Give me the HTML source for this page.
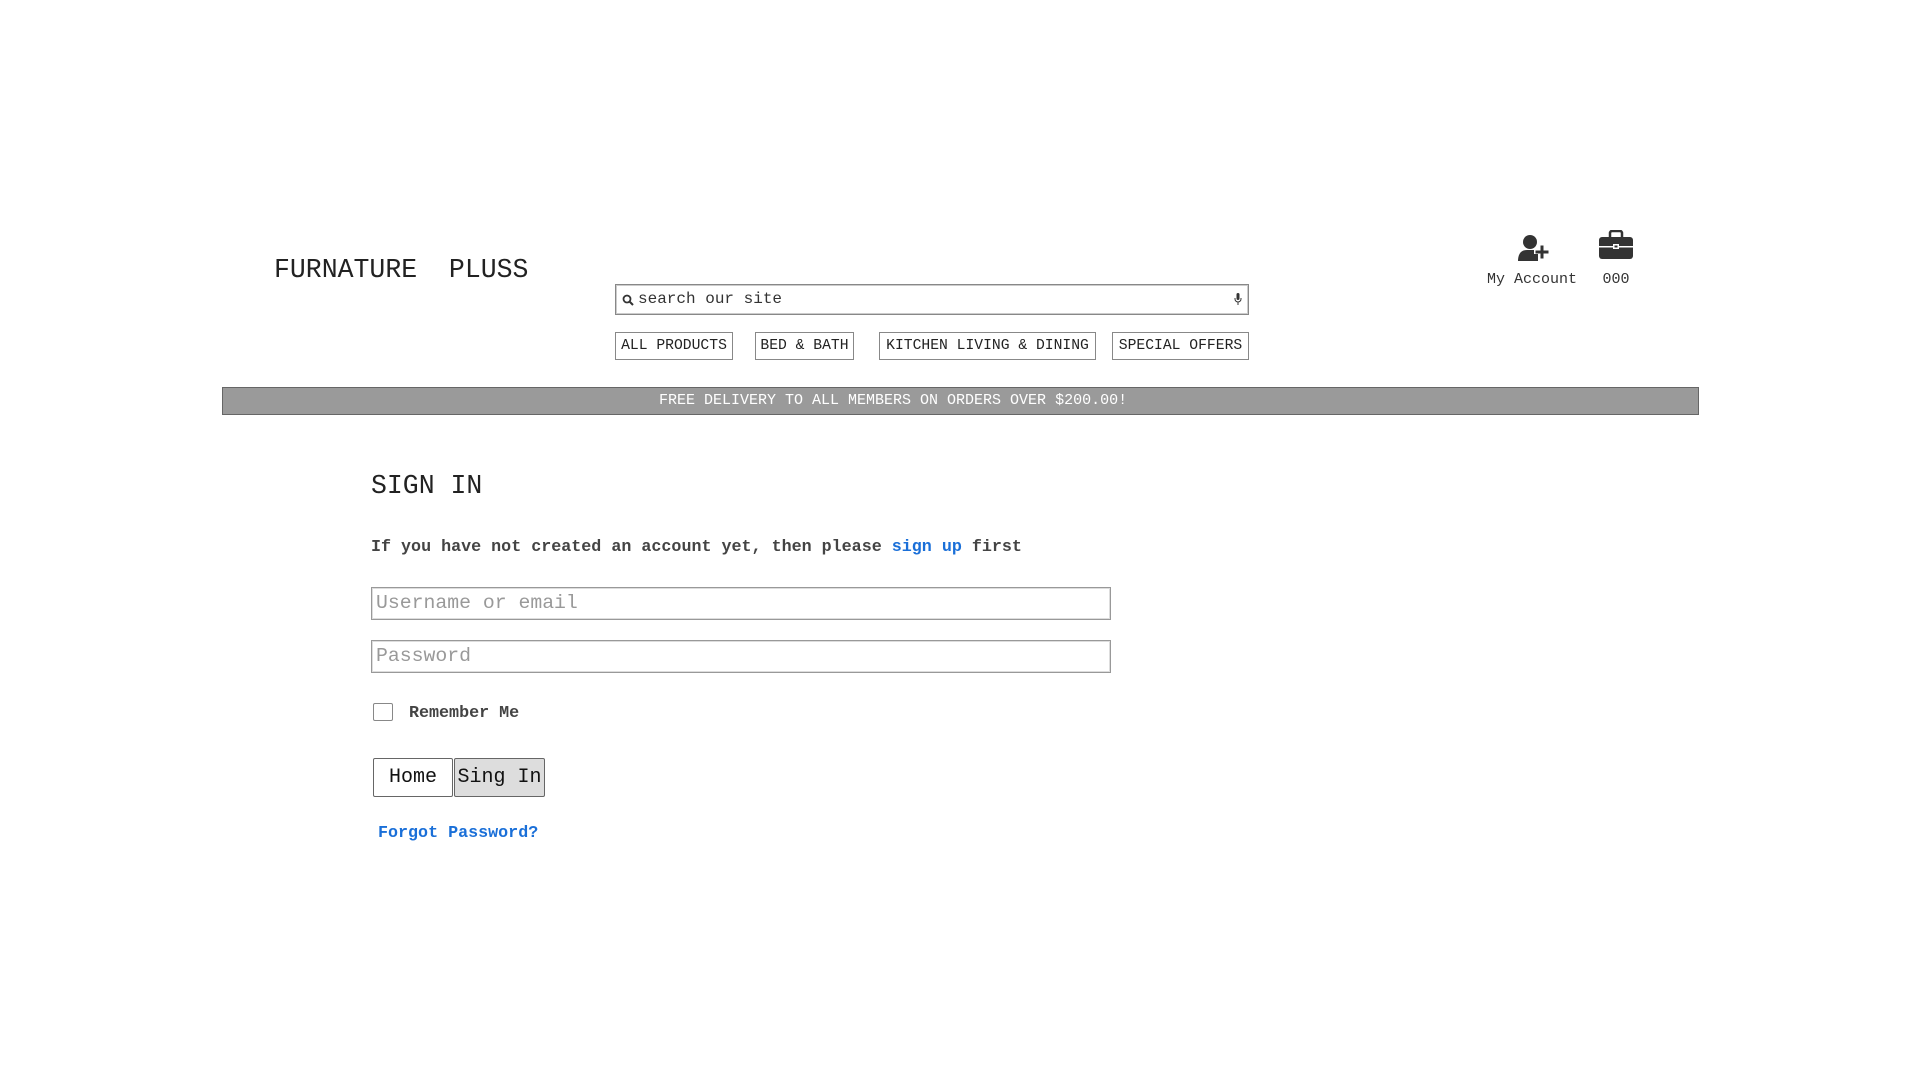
<!DOCTYPE html>
<html><head><meta charset="utf-8"><style>
*{box-sizing:border-box;margin:0;padding:0}
body{width:1920px;height:1080px;background:#fff;position:relative;font-family:"Liberation Mono",monospace;color:#333;overflow:hidden}
.a{position:absolute;white-space:nowrap}
.logo{left:274px;top:255px;font-size:26.5px;color:#222}
.search{left:615px;top:284px;width:634px;height:31px;border:1px solid #888;box-shadow:inset 0 0 0 1px #ccc}
.search span{position:absolute;left:22px;top:5px;font-size:16px;color:#333}
.nav{top:332px;height:28px;border:1px solid #888;font-size:14.7px;line-height:26px;text-align:center;color:#222}
.banner{left:222px;top:387px;width:1477px;height:28px;background:#9a9a9a;border:1px solid #666;color:#fff;font-size:15px;line-height:26px}
.lbl{font-size:15px;color:#333;transform:translateX(-50%)}
.inp{left:371px;width:740px;height:33px;border:1px solid #999;box-shadow:inset 0 0 0 1px #ddd;font-size:19.8px;color:#999;padding-left:4px;line-height:31px}
.btn{top:758px;height:39px;border:1px solid #666;font-size:20px;line-height:37px;text-align:center;color:#111}
.blue{color:#1a6fd8}
</style></head><body>
<div class="a logo">FURNATURE&nbsp;&nbsp;PLUSS</div>
<div class="a search">
<svg style="position:absolute;left:6px;top:9px" width="12" height="12" viewBox="0 0 12 12"><circle cx="5" cy="5" r="3.5" fill="none" stroke="#333" stroke-width="1.8"/><line x1="7.5" y1="7.5" x2="11" y2="11" stroke="#333" stroke-width="2"/></svg>
<span>search our site</span>
<svg style="position:absolute;right:6px;top:8px" width="8" height="13" viewBox="0 0 8 13"><rect x="2.5" y="0" width="3" height="7" rx="1.5" fill="#333"/><path d="M1 5v1a3 3 0 0 0 6 0V5M4 9v3" fill="none" stroke="#333" stroke-width="1"/></svg>
</div>
<div class="a nav" style="left:615px;width:118px">ALL PRODUCTS</div>
<div class="a nav" style="left:755px;width:99px">BED &amp; BATH</div>
<div class="a nav" style="left:879px;width:217px">KITCHEN LIVING &amp; DINING</div>
<div class="a nav" style="left:1112px;width:137px">SPECIAL OFFERS</div>
<div class="a banner"><span style="position:absolute;left:436px">FREE DELIVERY TO ALL MEMBERS ON ORDERS OVER $200.00!</span></div>
<svg class="a" style="left:1518px;top:234px" width="34" height="28" viewBox="0 0 34 28"><circle cx="12" cy="8" r="7" fill="#333"/><path d="M0 27c0-8 4-11 9-11h7c2 0 3 1 4 2v9z" fill="#333"/><rect x="16" y="15" width="16" height="5" fill="#fff"/><rect x="21" y="10" width="5" height="15" fill="#fff"/><rect x="17.5" y="16.5" width="13" height="3" fill="#333"/><rect x="22.5" y="11.5" width="3" height="13" fill="#333"/></svg>
<div class="a lbl" style="left:1532px;top:271px">My Account</div>
<svg class="a" style="left:1599px;top:230px" width="34" height="30" viewBox="0 0 34 30"><path d="M11 7V3a2 2 0 0 1 2-2h8a2 2 0 0 1 2 2v4" fill="none" stroke="#333" stroke-width="2.5"/><rect x="0" y="7" width="34" height="22" rx="3" fill="#333"/><rect x="0" y="16" width="34" height="1.5" fill="#fff"/><rect x="14" y="14" width="6" height="5" fill="#fff"/><rect x="15.5" y="15.5" width="3" height="2" fill="#333"/></svg>
<div class="a lbl" style="left:1616px;top:271px">000</div>
<div class="a" style="left:371px;top:471px;font-size:26.5px;color:#222">SIGN IN</div>
<div class="a" style="left:371px;top:538px;font-size:16.7px;font-weight:bold;color:#444">If you have not created an account yet, then please <span class="blue">sign up</span> first</div>
<div class="a inp" style="top:587px">Username or email</div>
<div class="a inp" style="top:640px">Password</div>
<div class="a" style="left:373px;top:703px;width:20px;height:18px;border:1px solid #888;border-radius:2px"></div>
<div class="a" style="left:409px;top:704px;font-size:16.7px;font-weight:bold;color:#444">Remember Me</div>
<div class="a btn" style="left:373px;width:80px;background:#fff;border-radius:2px">Home</div>
<div class="a btn" style="left:454px;width:91px;background:#ddd;border-radius:2px">Sing In</div>
<div class="a blue" style="left:378px;top:824px;font-size:16.7px;font-weight:bold">Forgot Password?</div>
</body></html>
